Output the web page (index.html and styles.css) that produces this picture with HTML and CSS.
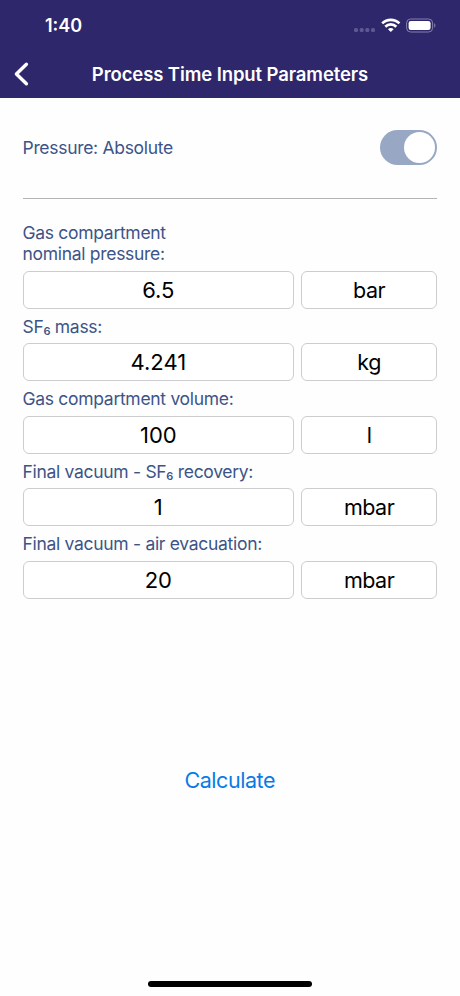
FILE: index.html
```html
<!DOCTYPE html>
<html lang="en">
<head>
  <meta charset="UTF-8" />
  <meta name="viewport" content="width=device-width, initial-scale=1" />
  <title>Process Time Input Parameters</title>
  <link rel="stylesheet" href="styles.css">
</head>
<body>
  <header class="header">
    <div class="status-bar">
      <span class="time">1:40</span>
      <svg class="status-icons" width="84" height="18" viewBox="0 0 84 18">
        <g fill="#5f5793">
          <rect x="1" y="11" width="4" height="4" rx="1.5" />
          <rect x="6.7" y="11" width="4" height="4" rx="1.5" />
          <rect x="12.3" y="11" width="4" height="4" rx="1.5" />
          <rect x="18" y="11" width="4" height="4" rx="1.5" />
        </g>
        <g fill="none" stroke="#fff" stroke-width="2.7">
          <path d="M29.2 6.4a12.2 12.2 0 0 1 17.2 0" />
          <path d="M32.3 9.7a7.8 7.8 0 0 1 11 0" />
        </g>
        <path d="M37.8 15l-2.8-2.8a3.9 3.9 0 0 1 5.6 0z" fill="#fff" />
        <rect x="53.6" y="2" width="26" height="13" rx="4" fill="none" stroke="#8680ad" />
        <rect x="55.6" y="4" width="22" height="9" rx="2.3" fill="#fff" />
        <path d="M81.2 6.3c1.6.6 1.6 3.8 0 4.4z" fill="#8680ad" />
      </svg>
    </div>
    <div class="nav-bar">
      <svg class="back" width="16" height="26" viewBox="0 0 16 26">
        <path d="M13.4 3.2L3.4 13l10 9.8" fill="none" stroke="#fff" stroke-width="3.4" stroke-linecap="round" stroke-linejoin="round" />
      </svg>
      <h1>Process Time Input Parameters</h1>
    </div>
  </header>

  <main class="content">
    <div class="pressure">
      <span class="label">Pressure: Absolute</span>
      <span class="toggle"></span>
    </div>

    <form class="params">
      <label class="label first" for="pressure">Gas compartment<br>nominal pressure:</label>
      <div class="row">
        <input type="text" id="pressure" value="6.5" />
        <div class="unit">bar</div>
      </div>

      <label class="label" for="mass">SF<span class="sub">6</span> mass:</label>
      <div class="row">
        <input type="text" id="mass" value="4.241" />
        <div class="unit">kg</div>
      </div>

      <label class="label" for="volume">Gas compartment volume:</label>
      <div class="row">
        <input type="text" id="volume" value="100" />
        <div class="unit">l</div>
      </div>

      <label class="label" for="recovery">Final vacuum - SF<span class="sub">6</span> recovery:</label>
      <div class="row">
        <input type="text" id="recovery" value="1" />
        <div class="unit">mbar</div>
      </div>

      <label class="label" for="evacuation">Final vacuum - air evacuation:</label>
      <div class="row">
        <input type="text" id="evacuation" value="20" />
        <div class="unit">mbar</div>
      </div>

      <button type="button">Calculate</button>
    </form>
  </main>

  <div class="home-indicator"></div>
</body>
</html>
```

FILE: styles.css
```css
* {
  box-sizing: border-box;
}
body {
  font-family: Inter, "Liberation Sans", sans-serif;
  background-color: #fefefe;
  margin: 0;
  height: 996px;
  display: flex;
  flex-direction: column;
  overflow: hidden;
}
.header {
  height: 98px;
  background-color: #2e276b;
  color: #fff;
}
.status-bar {
  height: 50px;
  padding: 0 23px 0 45px;
  display: flex;
  align-items: center;
  justify-content: space-between;
}
.time {
  font-size: 18px;
  font-weight: 600;
}
.status-icons {
  margin-top: 1px;
}
.nav-bar {
  height: 48px;
  padding: 0 29px 0 13px;
  display: flex;
  align-items: center;
}
h1 {
  flex: 1;
  margin: 0;
  font-size: 18.5px;
  font-weight: 600;
  letter-spacing: -0.1px;
  text-align: center;
  white-space: nowrap;
}
.content {
  flex: 1;
  padding: 0 23px 0 22.5px;
}
.pressure {
  height: 101px;
  padding-bottom: 1px;
  display: flex;
  align-items: center;
  justify-content: space-between;
  border-bottom: 1px solid #b4b4b6;
}
.label {
  display: block;
  height: 34.6px;
  padding-top: 7px;
  font-size: 17.5px;
  line-height: 21px;
  letter-spacing: -0.3px;
  color: #3c5488;
}
.pressure .label {
  height: auto;
  padding: 0;
}
.first {
  height: 71.6px;
  padding-top: 23px;
}
.sub {
  position: relative;
  top: 2px;
  font-size: 11px;
  font-weight: 600;
}
.toggle {
  width: 57px;
  height: 35px;
  padding: 2px;
  border-radius: 18px;
  background-color: #98a7c4;
}
.toggle::after {
  content: "";
  display: block;
  width: 31px;
  height: 31px;
  margin-left: auto;
  border-radius: 50%;
  background-color: #fff;
}
.row {
  display: grid;
  grid-template-columns: 2fr 1fr;
  gap: 7px;
}
input, .unit {
  width: 100%;
  height: 38px;
  padding: 0;
  border: 1px solid #cdcdcf;
  border-radius: 6px;
  background-color: #fff;
  font-family: inherit;
  font-size: 22px;
  line-height: 36px;
  color: #000;
  text-align: center;
}
.unit {
  font-size: 21.5px;
  letter-spacing: -0.5px;
}
button {
  display: block;
  margin: 165px auto 0;
  padding: 0;
  border: none;
  background: none;
  font-family: inherit;
  font-size: 21.5px;
  line-height: 32px;
  letter-spacing: -0.45px;
  color: #087be6;
  cursor: pointer;
}
.home-indicator {
  width: 164px;
  height: 6px;
  margin: 0 auto 9px;
  border-radius: 3px;
  background-color: #000;
}
```
